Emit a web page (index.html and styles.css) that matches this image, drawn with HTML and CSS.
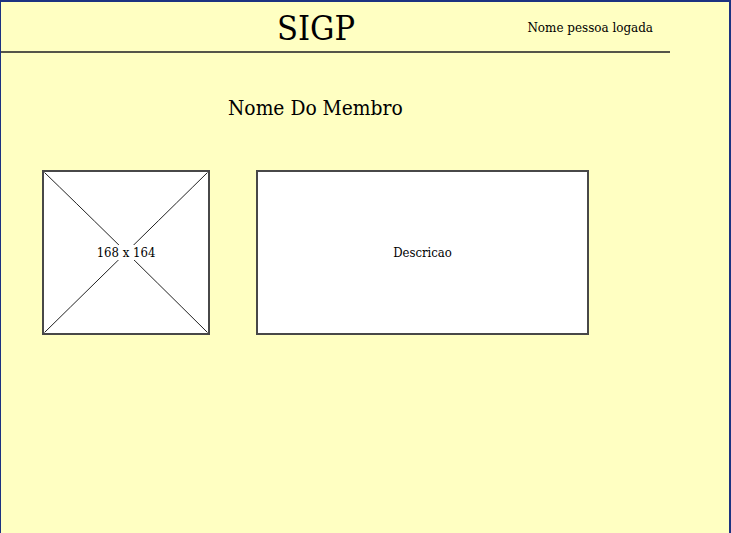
FILE: index.html
```html
<!DOCTYPE html>
<html>
<head>
<meta charset="utf-8">
<link rel="stylesheet" href="styles.css">
</head>
<body>
<div class="page">
  <header class="header">
    <h1 class="title">SIGP</h1>
    <span class="user">Nome pessoa logada</span>
  </header>
  <h2 class="member">Nome Do Membro</h2>
  <div class="cards">
    <div class="photo">
      <svg class="cross" width="168" height="165" viewBox="0 0 168 165">
        <path d="M2.5 2.5 Q60 58 165.5 162.5" fill="none" stroke="#222" stroke-width="1"/>
        <path d="M165.5 2.5 Q110 57 2.5 162.5" fill="none" stroke="#222" stroke-width="1"/>
      </svg>
      <span class="photo-label">168 x 164</span>
    </div>
    <div class="desc">Descricao</div>
  </div>
</div>
</body>
</html>
```
FILE: styles.css
```css
html, body {
  margin: 0;
  padding: 0;
}
body {
  font-family: "DejaVu Serif", serif;
  font-stretch: condensed;
  color: #000;
  background: #ffffc2;
}
.page {
  box-sizing: border-box;
  width: 731px;
  height: 533px;
  background: #ffffc2;
  border-top: 2px solid #1c3281;
  border-left: 1px solid #1c3281;
  border-right: 2px solid #1c3281;
}
.header {
  display: flex;
  align-items: center;
  width: 669px;
  height: 49px;
  border-bottom: 2px solid #55554a;
  box-sizing: content-box;
}
.title {
  margin: 0 0 0 276px;
  font-weight: normal;
  font-size: 34px;
  line-height: 48px;
  position: relative;
  top: 1px;
}
.user {
  margin-left: auto;
  margin-right: 17px;
  font-size: 13.3px;
  position: relative;
  top: 1px;
}
.member {
  margin: 43px 0 0 227px;
  font-weight: normal;
  font-size: 20.8px;
  line-height: 24px;
}
.cards {
  display: flex;
  gap: 46px;
  margin: 50px 0 0 41px;
}
.photo {
  position: relative;
  box-sizing: border-box;
  width: 168px;
  height: 165px;
  border: 2px solid #484848;
  background: #fff;
  display: flex;
  align-items: center;
  justify-content: center;
}
.cross {
  position: absolute;
  left: -2px;
  top: -2px;
}
.photo-label {
  position: relative;
  font-size: 13px;
  background: #fff;
  padding: 0 2px;
}
.desc {
  box-sizing: border-box;
  width: 333px;
  height: 165px;
  border: 2px solid #484848;
  background: #fff;
  display: flex;
  align-items: center;
  justify-content: center;
  font-size: 13px;
}
```
